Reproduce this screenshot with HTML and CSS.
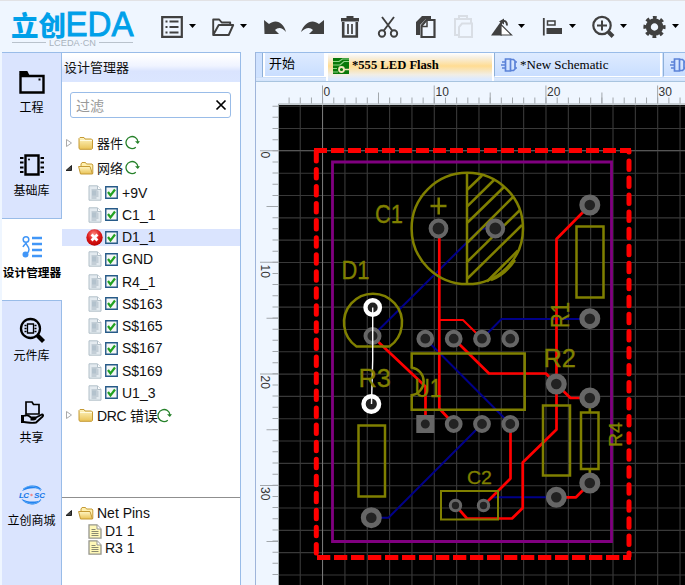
FILE: index.html
```html
<!DOCTYPE html>
<html lang="zh-CN">
<head>
<meta charset="utf-8">
<title>立创EDA</title>
<link rel="stylesheet" href="styles.css">
</head>
<body>
<svg class="defs" aria-hidden="true">
  <defs>
    <linearGradient id="gold" x1="0" y1="0" x2="0" y2="1"><stop offset="0" stop-color="#fff6c4"/><stop offset="1" stop-color="#e9c255"/></linearGradient>
    <radialGradient id="ball" cx=".45" cy=".3" r=".7"><stop offset="0" stop-color="#ff8a80"/><stop offset=".55" stop-color="#dc1c1c"/><stop offset="1" stop-color="#b00"/></radialGradient>
    <symbol id="folder" viewBox="0 0 16 14"><path d="M1 12.5V2.5l1-1h4l1 1.500h6.500l1 1v8.500l-1 .8H2z" fill="url(#gold)" stroke="#c59a35"/><path d="M2 4.500h12" stroke="#fffbe0"/></symbol>
    <symbol id="open" viewBox="0 0 16 14"><path d="M3 12V3l1-1.500h3.500l1 1.500H14l.8 1v8.500H3z" fill="#fff0ae" stroke="#c59a35"/><path d="M.6 5.500h11.400l2.500 7.500H2.500z" fill="url(#gold)" stroke="#c59a35"/></symbol>
    <symbol id="file" viewBox="0 0 14 16"><path d="M1 .8h8.500L13 4.500V15.200H1z" fill="#e3eaef" stroke="#b3c0c9"/><path d="M3.500 5h6M3.500 7h7M3.500 9h7M3.500 11h7M3.500 13h5" stroke="#a3b2be"/><path d="M4 5.500h4v5H4z" fill="#b3c2cd"/><path d="M9.500 1v3.500H13" fill="#fff" stroke="#b3c0c9"/></symbol>
    <symbol id="note" viewBox="0 0 14 15"><path d="M1 .8h8L13 5v9.200H1z" fill="#fff8b8" stroke="#96968e" stroke-width="1.300"/><path d="M3.500 5.500h4M3.500 7.500h7M3.500 9.500h7M3.500 11.500h7" stroke="#8a8a70"/><path d="M9 1v4h4" fill="#fff" stroke="#96968e"/></symbol>
    <symbol id="error" viewBox="0 0 16 16"><circle cx="8" cy="8" r="7.700" fill="url(#ball)"/><path d="M5.200 5.200l5.600 5.600M10.800 5.200l-5.600 5.600" stroke="#fff" stroke-width="2.600"/></symbol>
    <symbol id="check" viewBox="0 0 13 13"><path d="M.75.75h11.500v11.500H.75z" fill="#f4f6f7" stroke="#265a88" stroke-width="1.400"/><path d="M3 6l2.500 3.500L10 3.500" fill="none" stroke="#21a121" stroke-width="2.200"/></symbol>
    <symbol id="reload" viewBox="0 0 15 15"><path d="M10.800 12.200A6 6 0 1 1 13 7" fill="none" stroke="#26812a" stroke-width="1.300"/><path d="M10 6.300h5L12.800 9z" fill="#26812a"/></symbol>
    <symbol id="closed" viewBox="0 0 8 10"><path d="M1.500 1.500L6.500 5l-5 3.500z" fill="#fff" stroke="#aaa"/></symbol>
    <symbol id="expanded" viewBox="0 0 8 8"><path d="M6.500 1.500V6.500H1z" fill="#444" stroke="#222"/></symbol>
    <symbol id="chip" viewBox="0 0 16 16"><path d="M4.500 2h5v12h-5zM9.500 2.500h3l1.500 1.500v8l-1.500 1.500h-3M1 5h3.500M0 8h5M1 11h3.500M13.500 5H16M13.500 11H16" fill="none" stroke="#5b82d8" stroke-width="1.700"/></symbol>
  </defs>
</svg>

<div class="app">
  <header class="topbar">
    <svg class="logo" viewBox="0 0 126 50" width="126" height="50">
      <text class="logo-cn" x="1" y="34.500" textLength="55" lengthAdjust="spacingAndGlyphs">立创</text>
      <text class="logo-en" x="55.500" y="35" textLength="68" lengthAdjust="spacingAndGlyphs">EDA</text>
      <path d="M2 41.500h34M89 41.500h34" stroke="#b9c2cc"/>
      <text class="logo-sub" x="39" y="45" textLength="47" lengthAdjust="spacingAndGlyphs">LCEDA·CN</text>
    </svg>
    <svg class="tools" viewBox="150 0 535 52" width="535" height="52">
      <g fill="none" stroke="#404040">
        <path d="M162.200 17.200h19.600v19.600h-19.600z" stroke-width="2.200"/>
        <path d="M169.500 21.500h9M169.500 27h9M169.500 32.500h9M165.500 21.500h2M165.500 27h2M165.500 32.500h2" stroke-width="2"/>
        <path d="M213.200 35V19.500h6l2.500 3h8.500V26M213.200 35l5.500-10h14.500l-4.500 10z" stroke-width="1.900" stroke-linejoin="round"/>
      </g>
      <g fill="#404040">
        <path d="M264 20l5 4c7-6 15-1 17 8-4-5-8-5-11-2l4 4h-14.500z"/>
        <path d="M324 20l-5 4c-7-6-15-1-18 8 5-5 9-5 12-2l-4 4h15z"/>
        <path d="M341 18h5.500v-2h7v2h5.500v3.500h-18z"/>
        <path d="M343.200 22v14.500h13.600V22" fill="none" stroke="#404040" stroke-width="2.600"/>
        <path d="M348 24v10M352 24v10" stroke="#404040" stroke-width="1.700"/>
      </g>
      <g fill="none" stroke="#404040" stroke-width="1.900">
        <path d="M382 17l10.500 14M394 17l-10.500 14"/><circle cx="382" cy="33.500" r="3.200"/><circle cx="394" cy="33.500" r="3.200"/>
        <path d="M421.500 26l5-6h8v17h-13z" stroke-width="2.200"/><path d="M422 16h9v3h-5l-6 6v10h-4V22z" fill="#404040" stroke="none"/><path d="M422 26.500h5v-6" stroke-width="1.500"/>
      </g>
      <g fill="none" stroke="#d9dee5" stroke-width="2"><path d="M458 35h-3V19h16v4M459 19v-3h8v3M462 23.500h10V37h-13V27z"/></g>
      <path d="M502 20v15.500h-11z" fill="#404040"/><path d="M501 24.500V35h10.500z" fill="#fff" stroke="#404040" stroke-width="1.200"/><path d="M502 21.500c3-1.500 5 0 5 4" fill="none" stroke="#404040" stroke-width="2"/><path d="M499 21.500l5-3v6z" fill="#404040"/>
      <path d="M543.800 18v17.500" stroke="#404040" stroke-width="1.800"/><path d="M547.500 21h7.500v4h-7.500z" fill="none" stroke="#404040" stroke-width="1.500"/><path d="M546.500 28H562v6h-15.500z" fill="#404040"/>
      <g fill="none" stroke="#404040"><circle cx="602" cy="25.500" r="8.700" stroke-width="2.200"/><path d="M602 20.500v10M597 25.500h10" stroke-width="2"/><path d="M608.500 32l4.500 4.500" stroke-width="4"/></g>
      <g transform="translate(654.500 27)" fill="none" stroke="#404040"><circle r="6.200" stroke-width="5"/><circle r="9.300" stroke-width="3.600" stroke-dasharray="3.600 3.704" transform="rotate(-11)"/></g>
      <path d="M189 24h7l-3.500 4zM240 24h7l-3.500 4zM518 24h7l-3.500 4zM569 24h7l-3.500 4zM620 24h7l-3.500 4zM672 24h7l-3.500 4z" fill="#000"/>
    </svg>
  </header>

  <div class="main">
    <nav class="rail">
      <div class="rail-item"><svg viewBox="0 0 28 28" width="28" height="28"><path d="M2.500 8h23v16.500h-23z" fill="none" stroke="#000" stroke-width="2.400"/><path d="M1.300 3h8l2 4h-10z"/><path d="M20.500 10.500h2v2h-2z"/></svg><span>工程</span></div>
      <div class="rail-item"><svg viewBox="0 0 28 28" width="28" height="28"><path d="M7.500 4.500h13v19h-13z" fill="none" stroke="#000" stroke-width="2.400"/><path d="M2 7h3.500M2 11.500h3.500M2 16.500h3.500M2 21h3.500M22.500 7H26M22.500 11.500H26M22.500 16.500H26M22.500 21H26" stroke="#000" stroke-width="2"/><circle cx="11" cy="8.500" r="1"/></svg><span>基础库</span></div>
      <div class="rail-item active"><svg viewBox="0 0 28 28" width="28" height="28"><g fill="none" stroke="#4196f7"><circle cx="8" cy="6.500" r="2.800" stroke-width="1.500"/><path d="M8 9.500c0 3 3 3.500 3 7 0 2-1 3-2 4M5 14c1-2 2-2.500 3-4" stroke-width="1.500"/><path d="M14 5h10M14 11h10M14 17h10M14 23h10" stroke-width="2.600"/></g><circle cx="7.500" cy="21.500" r="3" fill="#4196f7"/></svg><span>设计管理器</span></div>
      <div class="rail-item"><svg viewBox="0 0 28 28" width="28" height="28"><circle cx="12.500" cy="12.500" r="9.500" fill="none" stroke="#000" stroke-width="2.300"/><path d="M19.500 19.500l6 6" stroke="#000" stroke-width="4.200"/><path d="M9.500 8h6v9h-6zM6.500 9.500h2M6.500 12.500h2M6.500 15.500h2M16.500 9.500h2M16.500 12.500h2M16.500 15.500h2" fill="none" stroke="#000" stroke-width="1.300"/></svg><span>元件库</span></div>
      <div class="rail-item"><svg viewBox="0 0 28 28" width="28" height="28"><path d="M8 16V4h6l1.500 2.500H21V16z" fill="none" stroke="#000" stroke-width="1.700"/><path d="M3 17h3v8H3z"/><path d="M6 18c4-2 5 0 7 1.500h4.500c1 2-2 2-5 2M17 20l7-3.500c2 .5 1 2-1 3.500l-5 4.500c-5 1-7 0-12-.5" fill="none" stroke="#000" stroke-width="1.900"/></svg><span>共享</span></div>
      <div class="rail-item"><svg viewBox="0 0 28 28" width="28" height="28"><path d="M4 10C9 3 20 3 24 9 17 6 10 7 4 10zM3.500 18c4 6 14 8 20 1-7 2.500-14 2-20-1z" fill="#2283f0"/><path d="M5 8c6-4 12-4 18 2M6 20c6 4 13 4 17-2" fill="none" stroke="#55a5f5"/><text class="lcsc" x="1" y="17" textLength="10">LC</text><text class="lcsc" x="16" y="17" textLength="11">SC</text><circle cx="13.500" cy="14" r="1.200" fill="#e88"/></svg><span>立创商城</span></div>
    </nav>

    <aside class="panel">
      <h1 class="panel-title">设计管理器</h1>
      <div class="filter"><span>过滤</span><svg viewBox="0 0 12 12" width="12" height="12"><path d="M1.500 1.500l9 9M10.500 1.500l-9 9" stroke="#000" stroke-width="1.700"/></svg></div>
      <div class="tree">
        <div class="branch"><svg class="arrow" width="8" height="10"><use href="#closed"/></svg><svg width="16" height="14"><use href="#folder"/></svg><span>器件</span><svg width="15" height="15"><use href="#reload"/></svg></div>
        <div class="branch"><svg class="arrow" width="8" height="8"><use href="#expanded"/></svg><svg width="16" height="14"><use href="#open"/></svg><span>网络</span><svg width="15" height="15"><use href="#reload"/></svg></div>
        <div class="leaf"><svg width="14" height="16"><use href="#file"/></svg><svg width="13" height="13"><use href="#check"/></svg><span>+9V</span></div>
        <div class="leaf"><svg width="14" height="16"><use href="#file"/></svg><svg width="13" height="13"><use href="#check"/></svg><span>C1_1</span></div>
        <div class="leaf selected"><svg class="err" width="17" height="17"><use href="#error"/></svg><svg width="13" height="13"><use href="#check"/></svg><span>D1_1</span></div>
        <div class="leaf"><svg width="14" height="16"><use href="#file"/></svg><svg width="13" height="13"><use href="#check"/></svg><span>GND</span></div>
        <div class="leaf"><svg width="14" height="16"><use href="#file"/></svg><svg width="13" height="13"><use href="#check"/></svg><span>R4_1</span></div>
        <div class="leaf"><svg width="14" height="16"><use href="#file"/></svg><svg width="13" height="13"><use href="#check"/></svg><span>S$163</span></div>
        <div class="leaf"><svg width="14" height="16"><use href="#file"/></svg><svg width="13" height="13"><use href="#check"/></svg><span>S$165</span></div>
        <div class="leaf"><svg width="14" height="16"><use href="#file"/></svg><svg width="13" height="13"><use href="#check"/></svg><span>S$167</span></div>
        <div class="leaf"><svg width="14" height="16"><use href="#file"/></svg><svg width="13" height="13"><use href="#check"/></svg><span>S$169</span></div>
        <div class="leaf"><svg width="14" height="16"><use href="#file"/></svg><svg width="13" height="13"><use href="#check"/></svg><span>U1_3</span></div>
        <div class="branch drc"><svg class="arrow" width="8" height="10"><use href="#closed"/></svg><svg width="16" height="14"><use href="#folder"/></svg><span>DRC 错误</span><svg width="15" height="15"><use href="#reload"/></svg></div>
      </div>
      <div class="pins">
        <div class="branch"><svg class="arrow" width="8" height="8"><use href="#expanded"/></svg><svg width="16" height="14"><use href="#open"/></svg><span>Net Pins</span></div>
        <div class="pin"><svg width="14" height="15"><use href="#note"/></svg><span>D1 1</span></div>
        <div class="pin"><svg width="14" height="15"><use href="#note"/></svg><span>R3 1</span></div>
      </div>
    </aside>

    <section class="work">
      <div class="tabs">
        <div class="tab-edge"></div>
        <div class="tab start">开始</div>
        <div class="tab current"><svg viewBox="0 0 16 16" width="16" height="16"><path d="M0 0h16v16H0z" fill="#087808"/><path d="M0 3.500h6L9.500 1H16M0 7h7l4-3.500h5M0 10.500h4M0 14h5" fill="none" stroke="#8ed486" stroke-width="1.200"/><circle cx="8.500" cy="11.500" r="2.500" fill="none" stroke="#f1e6bb" stroke-width="1.800"/><path d="M11 11.500h5" stroke="#f1e6bb" stroke-width="1.500"/></svg><span>*555 LED Flash</span></div>
        <div class="tab schematic"><svg width="16" height="16"><use href="#chip"/></svg><span>*New Schematic</span></div>
        <div class="tab last"><svg width="16" height="16"><use href="#chip"/></svg></div>
      </div>
      <svg class="canvas" viewBox="256 82 429 503" width="429" height="503">
        <path d="M279 105h406v480H279z" fill="#000"/>
        <path d="M278.500 585V104h406.500" fill="none" stroke="#a0a8aa"/>
        <!-- grid -->
        <path d="M299.700 345H685" stroke="#393939" stroke-width="480" stroke-dasharray="1.100 21.240"/>
        <path d="M482 105.700V585" stroke="#393939" stroke-width="406" stroke-dasharray="1.100 21.220"/>
        <path d="M322.500 105v480" stroke="#777"/>
        <path d="M279 150.500h406" stroke="#555"/>
        <!-- rulers -->
        <g stroke="#a2a7ac">
          <path d="M288.600 100.500H685" stroke-width="6" stroke-dasharray="1 10.170"/>
          <path d="M378 98H685" stroke-width="11" stroke-dasharray="1 110.700"/>
          <path d="M322 94.500H685" stroke-width="18" stroke-dasharray="1 110.700"/>
          <path d="M275.500 105.700V585" stroke-width="6" stroke-dasharray="1 10.150"/>
          <path d="M272.500 206.100V585" stroke-width="12" stroke-dasharray="1 110.600"/>
          <path d="M269.500 150.200V585" stroke-width="19" stroke-dasharray="1 110.600"/>
        </g>
        <g class="ruler-text">
          <text x="323.500" y="95.500">0</text><text x="435.500" y="95.500">10</text><text x="547" y="95.500">20</text><text x="658.500" y="95.500">30</text>
          <text transform="translate(261 151.500) rotate(90)">0</text><text transform="translate(261 264.500) rotate(90)">10</text><text transform="translate(261 375.500) rotate(90)">20</text><text transform="translate(261 487) rotate(90)">30</text>
        </g>
        <!-- bottom copper -->
        <g class="bottom">
          <path d="M372 336.500L480 229.500l5-1h10M482 338.700L501.500 319H590M425.300 338.700l85 85.300M371 517.700h17.500L482 424M483.500 505.500l8.500-8.200h64"/>
        </g>
        <!-- top copper -->
        <g class="top">
          <path d="M439.300 228v180.500l14.400 15.500M372 336l53.500 50.500V424M590 205l-33.500 34v190.500l-33.800 33V508L512 518.500h-45l-11.500-13M510.500 424v54.500l-27 27M453.700 338.700l35.300 34.800h57l10 10.500 14.500 14H590M556 497.300h20l14-14.300"/>
          <path class="thin" d="M439 320h24l19 18.700"/>
        </g>
        <path d="M332.500 162h279v379.500h-279z" fill="none" stroke="#800080" stroke-width="2.800"/>
        <g stroke="#f00" stroke-width="5">
          <path d="M314 150.500H631" stroke-dasharray="13 4"/>
          <path d="M317 557.500H631" stroke-dasharray="13.300 3.700"/>
          <g stroke-linecap="round"><path d="M316.300 151v10M629 151v1" /><path d="M316.300 169.500V556" stroke-dasharray="8.500 8.540"/><path d="M629 161V556" stroke-dasharray="8.500 8.540"/></g>
        </g>
        <!-- silkscreen -->
        <g class="silk">
          <circle cx="467.300" cy="228.400" r="55.700"/>
          <path d="M467 173v111M467 190l15-14.500M467 206.700L494 180M467 223l37-36M467 243l46-46M467 262l53-52M467 279l55-54M487 281.500l31-31M491 280q14-5 24-20"/>
          <path d="M430.500 206h16M438.700 197.500v17"/>
          <path d="M356.500 346.500H389.500A29 29 0 1 0 356.500 346.500z"/>
          <path d="M576.500 226.500h27v71h-27zM358.500 425.500h26.500v71h-26.500zM543 405.500h27v70h-27zM581 412.500h17.500v56.500H581zM589.800 407v5M589.800 469v5"/>
          <path d="M411.700 353.500h113v56.200h-113v-14.500a14 14 0 0 0 0-27.700z"/>
          <path d="M441 491h57v28.500h-57z" stroke-width="2"/>
        </g>
        <!-- pads -->
        <g class="pads">
          <circle cx="438.500" cy="228.500" r="7.900"/><circle cx="495.300" cy="228.500" r="7.900"/>
          <circle cx="372.500" cy="336" r="7"/>
          <circle cx="425.300" cy="338.700" r="6.900"/><circle cx="453.700" cy="338.700" r="6.900"/><circle cx="482" cy="338.700" r="6.900"/><circle cx="510.300" cy="338.700" r="6.900"/>
          <path d="M418.300 417h14v14h-14z"/><circle cx="425.300" cy="424" r="6.500"/>
          <circle cx="453.700" cy="424" r="6.900"/><circle cx="482" cy="424" r="6.900"/><circle cx="510.300" cy="424" r="6.900"/>
          <g class="big"><circle cx="589.800" cy="205" r="7.900"/><circle cx="589.800" cy="318.700" r="7.900"/><circle cx="371.300" cy="517.700" r="7.900"/><circle cx="556.300" cy="384" r="7.900"/><circle cx="556.300" cy="497.300" r="7.900"/><circle cx="589.800" cy="398" r="7.900"/><circle cx="589.800" cy="483" r="7.900"/></g>
          <g class="small"><circle cx="455.500" cy="505.500" r="5.200"/><circle cx="483.500" cy="505.500" r="5.200"/></g>
          <g class="lit"><circle cx="372.700" cy="307.500" r="7.200"/><circle cx="371.300" cy="404" r="7.800"/></g>
        </g>
        <path d="M372.700 307.500V360L371.500 404" fill="none" stroke="#fff" stroke-width="1.400"/>
        <g class="ref">
          <text x="375" y="223" textLength="28" lengthAdjust="spacingAndGlyphs">C1</text>
          <text x="341.500" y="279" textLength="28" lengthAdjust="spacingAndGlyphs">D1</text>
          <text x="358.500" y="386.500" textLength="32.500" lengthAdjust="spacingAndGlyphs">R3</text>
          <text x="414.500" y="397" textLength="27" lengthAdjust="spacingAndGlyphs">U1</text>
          <text x="543.500" y="366.500" textLength="32.500" lengthAdjust="spacingAndGlyphs">R2</text>
          <text transform="translate(568.500 328) rotate(-90)" textLength="26" lengthAdjust="spacingAndGlyphs">R1</text>
          <text class="sm" x="467" y="483.500" textLength="25" lengthAdjust="spacingAndGlyphs">C2</text>
          <text class="sm" transform="translate(621.500 447) rotate(-90)" textLength="25" lengthAdjust="spacingAndGlyphs">R4</text>
        </g>
      </svg>
    </section>
  </div>
</div>
</body>
</html>
```
FILE: styles.css
```css
* { box-sizing: border-box; }
body {
  margin: 0;
  background: #eff6ff;
  color: #111;
  font: 14px "Liberation Sans", "Noto Sans CJK SC", sans-serif;
  overflow: hidden;
}
svg { display: block; flex: none; }
.defs { width: 0; height: 0; position: absolute; }
.app { width: 685px; height: 585px; display: flex; flex-direction: column; border-top: 1px solid #e2e2e5; }
.topbar { height: 51px; flex: none; display: flex; }
.logo { margin: 0 14px 0 10px; overflow: visible; }
.logo-cn { font: 900 27px "Noto Sans CJK SC", sans-serif; fill: #00a0e9; }
.logo-en { font: 35px "Liberation Sans", sans-serif; fill: #00a0e9; stroke: #00a0e9; stroke-width: .9px; }
.logo-sub { font: 9px "Liberation Sans", sans-serif; fill: #a9b3bd; }
.tools { margin-top: -1px; }

.main { flex: 1; display: flex; min-height: 0; }

.rail { width: 58px; margin-left: 2px; background: #dae4fe; border-top: 1px solid #99bce8; flex: none; width: 59px; }
.rail-item { height: 82.600px; display: flex; flex-direction: column; align-items: center; padding-top: 15px; }
.rail-item span { margin-top: 1px; font: 12px/20px "Noto Sans CJK SC", sans-serif; white-space: nowrap; color: #000; }
.rail-item.active { background: #fff; position: relative; margin-right: -1px; border: solid #99bce8; border-width: 1px 0; padding-top: 14px; }
.rail-item.active span { font-weight: 700; font-size: 11.700px; }
.lcsc { font: italic bold 8px "Liberation Sans", sans-serif; fill: #1476e8; }

.panel { width: 180px; flex: none; background: #fff; border: 1px solid #99bce8; border-bottom: 0; display: flex; flex-direction: column; }
.panel-title { margin: 2px 0 0; height: 27px; padding-left: 2px; font: 13px/24px "Noto Sans CJK SC", sans-serif; background: linear-gradient(#fff, #f0f4ff 40%, #dae4fe 60%, #dbe6ff); }
.filter { margin: 10px 9px 0 8px; height: 26px; border: 1px solid #99bce8; border-radius: 3px; display: flex; align-items: center; justify-content: space-between; padding: 0 3px 0 5px; color: #999; }
.tree { padding-top: 12px; flex: 1; }
.branch { height: 25px; display: flex; align-items: center; padding-left: 3px; }
.branch .arrow { margin-right: 5px; }
.branch span { margin: 0 2px 0 3px; white-space: nowrap; }
.tree .branch span { font-size: 13px; }
.tree .branch.drc { margin-top: -4px; }
.tree .branch.drc span { font-size: 14px; letter-spacing: -.3px; margin-right: 0; }
.leaf { height: 17px; margin-bottom: 5.250px; display: flex; align-items: center; padding-left: 26px; }
.leaf:nth-child(3) { margin-top: 4px; }
.leaf svg + svg { margin: 0 4px 0 3px; }
.leaf .err { margin-left: -2px; margin-right: -1px; }
.leaf.selected { background: #dae4fe; }
.pins { height: 88px; border-top: 1px solid #8f8f8f; padding-top: 5px; }
.pin { height: 16.500px; display: flex; align-items: center; padding-left: 26px; }
.pins .branch { height: 20px; }
.pin span { margin-left: 3px; }

.work { flex: 1; min-width: 0; margin-left: 14px; border-left: 1px solid #9fb5da; }
.tabs { height: 30px; display: flex; border: solid #99bce8; border-width: 1px 0; border-bottom-color: #a8c4df; background: linear-gradient(#cfe2ff 24px, #bcd4f2 24px, #deebff 25px, #d2e3fb); font: 13px "Liberation Serif", "Noto Sans CJK SC", serif; color: #000; overflow: hidden; }
.tab { height: 24px; flex: none; display: flex; align-items: center; border: solid #fff; border-width: 0 2px 1px; background: linear-gradient(#deebff, #c9deff); white-space: nowrap; }
.tab-edge { width: 7px; height: 24px; border-right: 1px solid #8eb0d8; flex: none; }
.tab.start { width: 63px; padding: 0 0 5px 4px; font-family: "Noto Sans CJK SC", sans-serif; }
.tab.current { width: 168px; height: 29px; padding: 0 0 4px 5px; border-width: 0 2px; font-weight: 700; background: linear-gradient(#fff, #f7f0e2 15%, #ffdc92 45%, #f1eee6 75%, #dceaff 90%); }
.tab.current span { margin-left: 3px; font-size: 12.600px; }
.tab.schematic { width: 168px; padding-left: 6px; border-left: 1px solid #8eb0d8; }
.tab.schematic span { margin-left: 3px; }
.tab.last { width: 30px; padding-left: 6px; border-left: 1px solid #8eb0d8; margin-left: 1px; }
.ruler-text { font: 12px "Liberation Sans", sans-serif; fill: #333; }

.bottom { fill: none; stroke: #000088; stroke-width: 2; }
.top { fill: none; stroke: #f00; stroke-width: 2.700; stroke-linejoin: round; }
.top .thin { stroke-width: 2; }
.silk { fill: none; stroke: #808000; stroke-width: 2.500; }
.pads { fill: #222; stroke: #666; stroke-width: 4; }
.pads .big { stroke-width: 5.200; }
.pads .small { stroke-width: 3; }
.pads .lit { stroke: #fff; stroke-width: 4.400; }
.ref { font: 26px "Liberation Sans", sans-serif; fill: #808000; stroke: #808000; stroke-width: .3px; }
.ref .sm { font-size: 19px; }
```
